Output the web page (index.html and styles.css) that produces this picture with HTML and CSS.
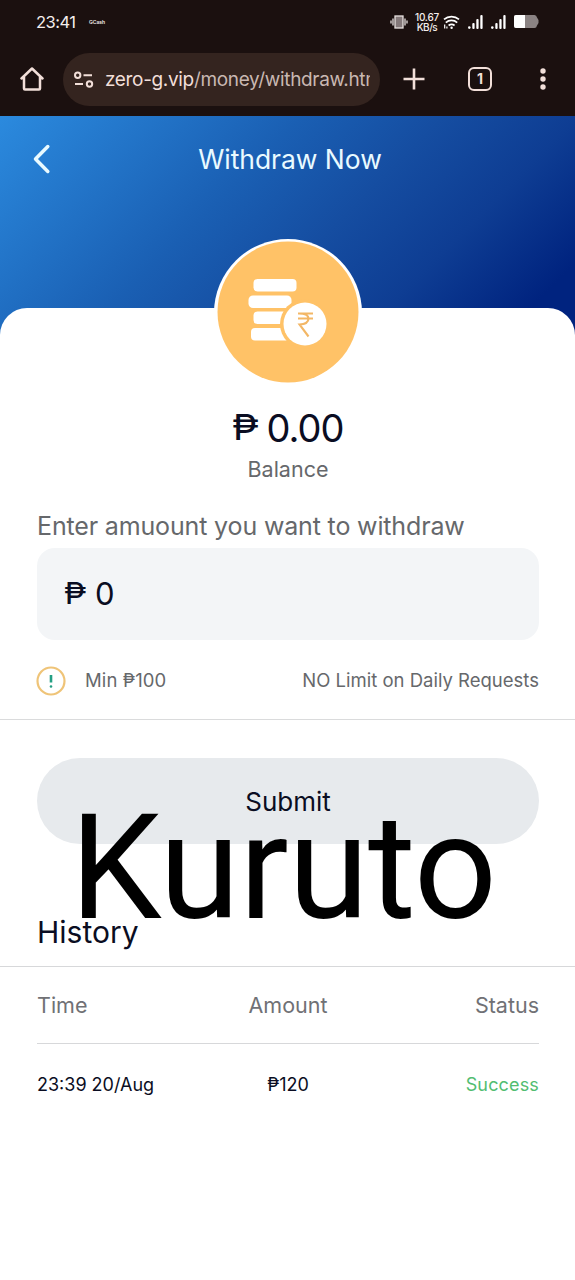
FILE: index.html
```html
<!DOCTYPE html>
<html lang="en">
<head>
<meta charset="utf-8">
<title>Withdraw Now</title>
<link rel="stylesheet" href="styles.css">
</head>
<body>
<div class="status-bar">
  <span class="clock">23:41</span>
  <span class="carrier">GCash</span>
  <div class="indicators">
    <svg class="vibrate" width="18" height="14" viewBox="0 0 18 14" fill="none" stroke="#e9e2e0" stroke-width="1.3"><rect x="5" y="1" width="8" height="12" fill="#84797a"/><path d="M3 3.500v7M1 5.500v3M15 3.500v7M17 5.500v3"/></svg>
    <span class="speed"><span class="rate">10.67</span><span>KB/s</span></span>
    <svg class="wifi" width="17" height="14" viewBox="0 0 17 14" fill="none" stroke="#fff" stroke-width="1.7"><path d="M1 4.400a11.500 11.500 0 0 1 15 0M2.800 7.600a8.500 8.500 0 0 1 11.400 0M5.600 10.500a4.800 4.800 0 0 1 6 0"/><circle cx="8.600" cy="12.700" r="1.200" fill="#fff" stroke="none"/><path d="M1.700 9.500v4M3.900 11.500v2" stroke-width="1.200"/></svg>
    <svg class="signal" width="15" height="14" viewBox="0 0 15 14" fill="#fff"><circle cx="1.300" cy="12.600" r="1.300"/><rect x="4.300" y="8" width="2.300" height="6" rx="1"/><rect x="8.300" y="4" width="2.300" height="10" rx="1"/><rect x="12.300" y="0" width="2.300" height="14" rx="1"/></svg>
    <svg class="signal" width="15" height="14" viewBox="0 0 15 14" fill="#fff"><circle cx="1.300" cy="12.600" r="1.300"/><rect x="4.300" y="8" width="2.300" height="6" rx="1"/><rect x="8.300" y="4" width="2.300" height="10" rx="1"/><rect x="12.300" y="0" width="2.300" height="14" rx="1"/></svg>
    <svg class="battery" width="25" height="13" viewBox="0 0 25 13"><path d="M2 0H20.500Q22.500 0 23 2.500L24.500 5V8L23 10.500Q22.500 13 20.500 13H2Q0 13 0 11V2Q0 0 2 0Z" fill="#8b8383"/><path d="M2 0H11V13H2Q0 13 0 11V2Q0 0 2 0Z" fill="#fff"/></svg>
  </div>
</div>
<div class="browser-bar">
  <svg class="home" width="24" height="24" viewBox="0 0 24 24" fill="none" stroke="#f2dfd9" stroke-width="2.500" stroke-linejoin="round" stroke-linecap="round"><path d="M1.500 11.500 12 1.500 22.500 11.500M4 10V21.500Q4 22.500 5 22.500H19Q20 22.500 20 21.500V10"/></svg>
  <div class="address">
    <svg width="20" height="18" viewBox="0 0 20 18" fill="none" stroke="#f2dfd9" stroke-width="2"><circle cx="3.700" cy="4.300" r="2.700"/><path d="M9.500 4.300H18M1 13H9"/><circle cx="15.500" cy="13" r="2.700"/></svg>
    <span class="url"><b>zero-g.vip</b>/money/withdraw.html</span>
  </div>
  <svg class="plus" width="22" height="22" viewBox="0 0 22 22" stroke="#f2dfd9" stroke-width="2.600"><path d="M.5 11H21.500M11 .5V21.500"/></svg>
  <div class="tabs">1</div>
  <svg class="more" width="6" height="22" viewBox="0 0 6 22" fill="#f2dfd9"><circle cx="3" cy="3" r="2.700"/><circle cx="3" cy="11" r="2.700"/><circle cx="3" cy="19" r="2.700"/></svg>
</div>
<main class="page">
  <header class="hero">
    <svg class="back" width="18" height="30" viewBox="0 0 18 30" fill="none" stroke="#e9faff" stroke-width="3.500" stroke-linecap="round" stroke-linejoin="round"><path d="M14.800 2.500 2.500 15 14.800 27.500"/></svg>
    <h1 class="title">Withdraw Now</h1>
  </header>
  <section class="sheet">
    <svg class="coin" width="148" height="148" viewBox="0 0 148 148"><circle cx="74" cy="75" r="74" fill="#fff"/><circle cx="74" cy="74" r="70.500" fill="#ffc267"/><g fill="#fff"><rect x="39.500" y="41" width="43" height="12.500" rx="4"/><rect x="34.500" y="57.500" width="43" height="12.500" rx="4.500"/><rect x="39.500" y="73.500" width="43" height="12.500" rx="4"/><rect x="37" y="90" width="43" height="12.500" rx="4"/></g><circle cx="91" cy="86" r="25" fill="#ffc267"/><circle cx="91" cy="86" r="21.500" fill="#fff"/><path d="M84 75.500H99M84 80.500H99M85 75.500Q94.500 75.500 94.500 80.500 94.500 86 85.500 86.500L94.500 98.500" fill="none" stroke="#f3b766" stroke-width="2.100"/></svg>
    <div class="amount"><span class="peso">₱</span><span>0.00</span></div>
    <div class="balance">Balance</div>
    <label class="prompt">Enter amuount you want to withdraw</label>
    <div class="field"><span class="peso">₱</span><span>0</span></div>
    <div class="limits">
      <svg width="30" height="30" viewBox="0 0 30 30"><circle cx="15" cy="15" r="13.500" fill="none" stroke="#efc478" stroke-width="2.200"/><path d="M15 9V16.500" stroke="#249f83" stroke-width="2.600"/><circle cx="15" cy="20.500" r="1.300" fill="#249f83"/></svg>
      <span class="minimum">Min <i>₱</i>100</span>
      <span class="daily">NO Limit on Daily Requests</span>
    </div>
    <div class="action"><div class="submit">Submit</div><div class="overlay">Kuruto</div></div>
    <h2 class="history">History</h2>
    <div class="table">
      <div class="row head"><span>Time</span><span>Amount</span><span>Status</span></div>
      <div class="row entry"><span>23:39 20/Aug</span><span><i>₱</i>120</span><span class="success">Success</span></div>
    </div>
  </section>
</main>
</body>
</html>
```
FILE: styles.css
```css
* { box-sizing: border-box; }
body { margin: 0; width: 575px; background: #fff; color: #0a0d22; font-family: Inter, sans-serif; font-weight: 400; overflow-x: hidden; }
svg { display: block; flex: none; }
i, b { font-style: normal; font-weight: inherit; }
.status-bar { height: 42px; background: #1b100f; color: #f5eeec; display: flex; align-items: center; padding: 1px 36px 0; }
.clock { font-size: 16.5px; line-height: 20px; width: 53px; letter-spacing: -.5px; }
.carrier { font-size: 5px; font-weight: 600; }
.indicators { margin-left: auto; display: flex; align-items: center; }
.speed { display: flex; flex-direction: column; align-items: center; width: 24px; margin: 0 4px 0 7px; font-size: 10px; line-height: 10px; font-weight: 500; letter-spacing: -.5px; }
.rate { letter-spacing: -.2px; }
.signal { margin-left: 8px; }
.battery { margin-left: 8px; }
.browser-bar { height: 74px; background: #1b100f; display: flex; align-items: center; padding: 0 29px 0 20px; }
.address { width: 317px; height: 53px; margin-left: 19px; border-radius: 27px; background: #34241f; display: flex; align-items: center; padding: 1px 10px 0 11px; gap: 11px; }
.url { width: 265px; overflow: hidden; white-space: nowrap; font-size: 19px; line-height: 26px; padding-top: 1px; letter-spacing: -.34px; color: #c9b8b2; }
.url b { color: #f2dfd9; }
.plus { margin-left: 23px; }
.tabs { width: 24px; height: 24px; margin-left: 43px; border: 2.500px solid #f2dfd9; border-radius: 6px; color: #f2dfd9; font-size: 14px; line-height: 19px; font-weight: 700; text-align: center; }
.more { margin-left: auto; }
.page { position: relative; }
.hero { height: 219px; margin-bottom: -27px; background: linear-gradient(135deg, #2b8ade 0%, #1a5fb3 38%, #154da1 56%, #0e3d93 73%, #00237f 91%); display: flex; padding: 28px 33px 0; }
.title { flex: 1; margin: 0 13px 0 0; text-align: center; color: #e9faff; font-weight: 400; font-size: 26.5px; line-height: 31px; letter-spacing: -.05px; }
.sheet { position: relative; background: #fff; border-radius: 27px 27px 0 0; padding-top: 98px; height: 972px; }
.coin { position: absolute; left: 214px; top: -70px; }
.peso { transform: scaleX(1.12); transform-origin: left; }
.amount { display: flex; justify-content: center; gap: 12px; font-size: 38px; line-height: 45px; letter-spacing: -1px; }
.amount .peso { font-size: 36px; line-height: 43px; }
.balance { text-align: center; font-size: 21.5px; line-height: 26px; color: #66686b; margin-top: 5px; padding-left: 1px; }
.prompt { display: block; padding: 0 37px; margin-top: 28px; font-size: 25px; line-height: 32px; color: #66686b; letter-spacing: -.15px; }
.field { height: 92px; margin: 6px 36px 0 37px; border-radius: 18px; background: #f3f5f7; padding: 0 27px 2px; display: flex; align-items: center; gap: 11px; font-size: 31px; }
.field .peso { font-size: 30px; }
.limits { height: 80px; border-bottom: 1px solid #dadbdc; padding: 2px 36px 0; display: flex; align-items: center; font-size: 18.5px; color: #66686b; }
.limits span { padding-bottom: 2px; }
.minimum { margin-left: 19px; letter-spacing: .1px; }
.daily { margin-left: auto; }
.action { position: relative; padding: 38px 36px 0 37px; height: 193px; }
.submit { height: 86px; border-radius: 43px; background: #e7eaed; display: flex; align-items: center; justify-content: center; font-size: 26px; }
.overlay { position: absolute; left: 70px; top: 63px; font-family: Roboto, sans-serif; font-size: 146px; line-height: 171px; letter-spacing: -.6px; color: #000; white-space: nowrap; }
.history { margin: 0; padding: 0 37px; height: 54px; font-size: 30px; line-height: 38px; font-weight: 400; border-bottom: 1px solid #d7d8da; }
.table { padding: 0 36px 0 37px; }
.row { display: grid; grid-template-columns: 1fr 1fr 1fr; align-items: center; text-align: center; }
.row > :first-child { text-align: left; }
.row > :last-child { text-align: right; }
.head { height: 77px; font-size: 21.5px; color: #707175; border-bottom: 1px solid #d7d8da; }
.entry { height: 81px; font-size: 18px; }
.success { color: #52bd71; letter-spacing: .15px; }
```
